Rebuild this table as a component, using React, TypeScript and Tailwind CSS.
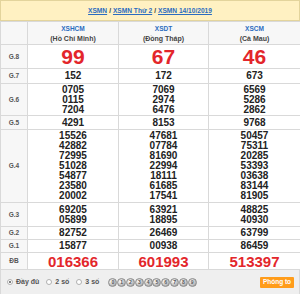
const cols = [
  { code: 'XSHCM', name: '(Hồ Chí Minh)' },
  { code: 'XSDT', name: '(Đồng Tháp)' },
  { code: 'XSCM', name: '(Cà Mau)' },
];

type Row = { label: string; h: string; values: string[][]; big?: 'g8' | 'db' };

const rows: Row[] = [
  { label: 'G.8', h: 'h-[24px]', values: [['99'], ['67'], ['46']], big: 'g8' },
  { label: 'G.7', h: 'h-[15px]', values: [['152'], ['172'], ['673']] },
  {
    label: 'G.6',
    h: 'h-[32px]',
    values: [
      ['0705', '0115', '7204'],
      ['7069', '2974', '6476'],
      ['6569', '5286', '2862'],
    ],
  },
  { label: 'G.5', h: 'h-[14px]', values: [['4291'], ['8153'], ['9768']] },
  {
    label: 'G.4',
    h: 'h-[73px]',
    values: [
      ['15526', '42882', '72995', '51028', '54877', '23580', '20002'],
      ['47681', '07784', '81690', '22994', '18111', '61685', '17541'],
      ['50457', '75311', '20285', '53393', '03638', '83144', '81905'],
    ],
  },
  {
    label: 'G.3',
    h: 'h-[24px]',
    values: [
      ['69205', '05899'],
      ['63921', '18895'],
      ['48825', '40930'],
    ],
  },
  { label: 'G.2', h: 'h-[13px]', values: [['82752'], ['26469'], ['63799']] },
  { label: 'G.1', h: 'h-[13px]', values: [['15877'], ['00938'], ['86459']] },
  { label: 'ĐB', h: 'h-[17px]', values: [['016366'], ['601993'], ['513397']], big: 'db' },
];

function Radio({ checked, label }: { checked?: boolean; label: string }) {
  return (
    <span className="flex items-center gap-[3px]">
      <span className="flex h-[6px] w-[6px] items-center justify-center rounded-full border border-[#b0b0b0] bg-white">
        {checked && <span className="h-[2px] w-[2px] rounded-full bg-[#555]" />}
      </span>
      <span>{label}</span>
    </span>
  );
}

export default function App() {
  return (
    <div className="w-[300px] h-[294px] overflow-hidden bg-white font-['Liberation_Sans',Arial,sans-serif]">
      {/* Breadcrumb */}
      <div className="flex h-[21px] items-center justify-center border border-[#e3d49c] bg-[#fff1c2] text-[6.6px] font-bold text-[#2b6cc0]">
        <span className="underline">XSMN</span>
        <span className="mx-[2px] text-[#333]">/</span>
        <span className="underline">XSMN Thứ 2</span>
        <span className="mx-[2px] text-[#333]">/</span>
        <span className="underline">XSMN 14/10/2019</span>
      </div>

      {/* Results table */}
      <table className="w-[300px] table-fixed border-collapse">
        <colgroup>
          <col className="w-[27px]" />
          <col className="w-[91px]" />
          <col className="w-[90px]" />
          <col className="w-[92px]" />
        </colgroup>
        <thead>
          <tr>
            <th className="h-[23px] border border-[#d9d9d9] bg-[#f7f7f7]" />
            {cols.map((c) => (
              <th key={c.code} className="h-[23px] border border-[#d9d9d9] bg-[#f7f7f7] p-0 text-center font-bold leading-[9px]">
                <div className="text-[6.5px] text-[#2b6cc0]">{c.code}</div>
                <div className="mt-[1px] text-[7px] text-[#444]">{c.name}</div>
              </th>
            ))}
          </tr>
        </thead>
        <tbody>
          {rows.map((r) => (
            <tr key={r.label}>
              <td className={`${r.h} border border-[#d9d9d9] bg-[#f7f7f7] p-0 text-center text-[6.5px] font-bold text-[#555]`}>
                {r.label}
              </td>
              {r.values.map((v, i) => (
                <td key={i} className={`${r.h} border border-[#d9d9d9] p-0 text-center font-bold`}>
                  {r.big === 'g8' ? (
                    <div className="text-[21px] leading-[22px] text-[#e3262b]">{v[0]}</div>
                  ) : r.big === 'db' ? (
                    <div className="text-[15px] leading-[15px] text-[#e3262b]">{v[0]}</div>
                  ) : (
                    v.map((n) => (
                      <div key={n} className="text-[10px] leading-[10px] text-[#222]">
                        {n}
                      </div>
                    ))
                  )}
                </td>
              ))}
            </tr>
          ))}
        </tbody>
      </table>

      {/* Footer controls */}
      <div className="flex h-[25px] items-center border border-t-0 border-[#d9d9d9] bg-[#efefef] pl-[6px] pr-[5px] text-[7px] font-bold text-[#555]">
        <div className="flex items-center gap-[7px]">
          <Radio checked label="Đầy đủ" />
          <Radio label="2 số" />
          <Radio label="3 số" />
        </div>
        <div className="ml-[9px] flex">
          {['0', '1', '2', '3', '4', '5', '6', '7', '8', '9'].map((d) => (
            <span
              key={d}
              className="-mr-[0.2px] flex h-[9px] w-[9px] items-center justify-center rounded-full border border-[#8c8c8c] bg-[radial-gradient(circle_at_35%_35%,#ffffff,#8f8f8f)] text-[5px] leading-none text-[#555]"
            >
              {d}
            </span>
          ))}
        </div>
        <button className="ml-auto h-[11px] w-[34px] rounded-[1px] bg-[#ff9c1a] text-[6.5px] font-bold leading-none text-white">
          Phóng to
        </button>
      </div>
    </div>
  );
}
